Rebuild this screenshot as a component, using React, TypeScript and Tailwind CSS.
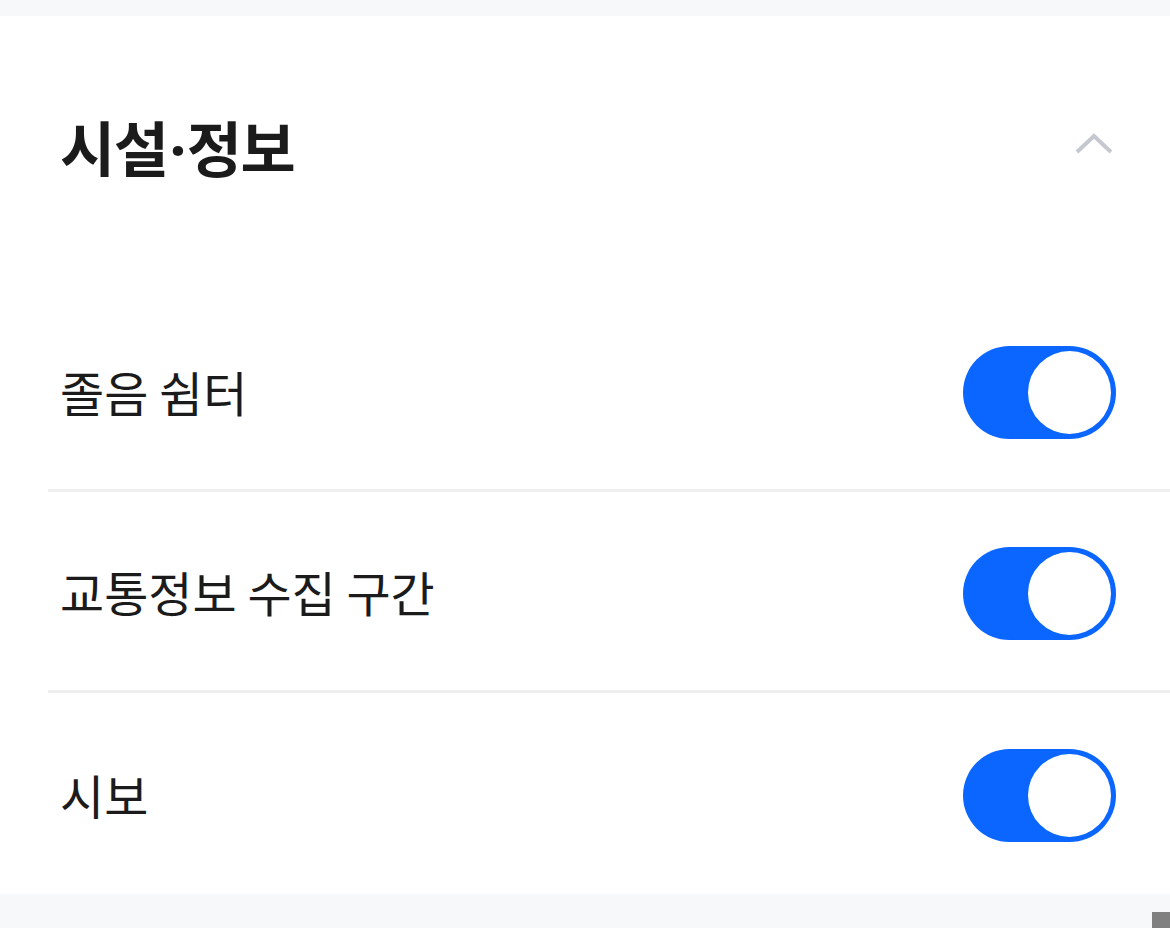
import { useState } from "react"

const rows = ["졸음 쉼터", "교통정보 수집 구간", "시보"]

function Toggle({ on, onChange }: { on: boolean; onChange: () => void }) {
  return (
    <button
      onClick={onChange}
      className={`mt-1 flex h-[93px] w-[153px] items-center rounded-full p-[5px] ${on ? "justify-end bg-[#0a66ff]" : "justify-start bg-[#d5d8dd]"}`}
    >
      <span className="block h-[83px] w-[83px] rounded-full bg-white" />
    </button>
  )
}

export default function App() {
  const [state, setState] = useState([true, true, true])

  return (
    <div className="relative flex h-[928px] w-[1170px] flex-col bg-[#f7f8fa] font-['Noto_Sans_CJK_KR','Noto_Sans',sans-serif] text-[#1b1b1b]">
      <div className="h-4" />
      <section className="flex h-[878px] flex-col bg-white">
        {/* header */}
        <div className="flex h-[260px] items-start justify-between pl-[60px] pr-[56px] pt-[94px]">
          <h2 className="text-[60px] font-bold leading-[72px] tracking-[-1.5px]">
            시설<span className="mx-[2px] font-['Noto_Sans',sans-serif]">·</span>정보
          </h2>
          <svg width="40" height="24" viewBox="0 0 40 24" className="mt-[22px]" fill="none">
            <path d="M3 20 L20 4 L37 20" stroke="#c5c9cf" strokeWidth="4" />
          </svg>
        </div>
        {/* list */}
        <ul className="flex flex-col pl-12">
          {rows.map((label, i) => (
            <li
              key={label}
              className={`flex h-[201px] items-center justify-between pr-[54px] ${i === 0 ? "h-[230px] pt-[30px]" : ""} ${i < rows.length - 1 ? "border-b-[3px] border-[#efefef]" : ""}`}
            >
              <span className="pl-3 text-[48px] leading-none">{label}</span>
              <Toggle on={state[i]} onChange={() => setState(s => s.map((v, j) => (j === i ? !v : v)))} />
            </li>
          ))}
        </ul>
      </section>
      <div className="absolute bottom-0 right-0 h-4 w-[18px] bg-[#808080]" />
    </div>
  )
}
